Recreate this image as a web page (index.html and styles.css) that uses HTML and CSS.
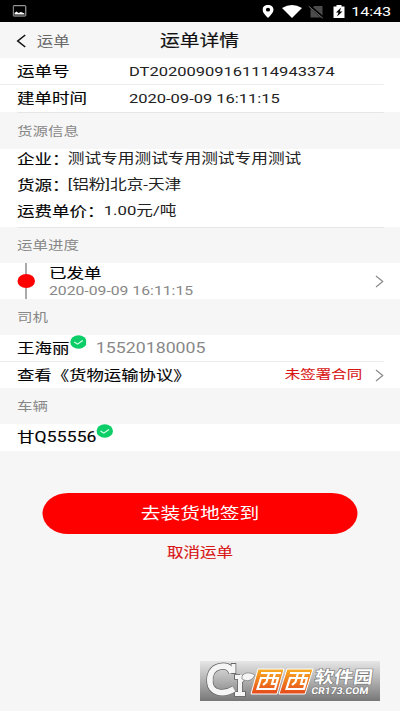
FILE: index.html
```html
<!DOCTYPE html>
<html lang="zh-CN">
<head>
<meta charset="utf-8">
<title>运单详情</title>
<link rel="stylesheet" href="styles.css">
</head>
<body>
<main class="screen">
  <div class="status">
    <svg class="pic" width="11.2" height="12" viewBox="0 0 14 12" preserveAspectRatio="none"><rect x=".7" y=".7" width="12.6" height="10.3" rx=".6" fill="none" stroke="#bbb" stroke-width="1"/><path d="M2 9.500V8L4 6.500L6 8L8.500 7L12 8.500V9.500Z" fill="#fff"/></svg>
    <svg class="tray" width="92" height="16" viewBox="0 0 115 16" preserveAspectRatio="none">
      <path fill="#fff" fill-rule="evenodd" d="M5.500 2C2.300 2 0 4 0 6.800C0 10 5.500 15 5.500 15S11 10 11 6.800C11 4 8.700 2 5.500 2ZM5.500 4.800A2.100 1.900 0 1 1 5.500 8.600A2.100 1.900 0 1 1 5.500 4.800Z"/>
      <path fill="#fff" d="M19.500 5Q29.500-1 39.500 5L29.500 15Z"/>
      <path fill="#4c4c4c" d="M48 5.500L52 3H60V14.500H48Z"/><path d="M46.500 2.500L61 15" stroke="#000" stroke-width="2.600"/><path d="M46.300 3.300L60.300 15.200" stroke="#777" stroke-width="1"/>
      <path fill="#fff" d="M71 3.500H74V2H79V3.500H82V15H71Z"/><path d="M78.500 4.500L73.500 9.500H76L74.500 13.500L80 8.500H77.300Z" fill="#000"/>
    </svg>
    <span class="clock">14:43</span>
  </div>
  <header class="nav">
    <svg width="8" height="14" viewBox="0 0 10 14" preserveAspectRatio="none"><path d="M9 1L1.500 7L9 13" fill="none" stroke="#111" stroke-width="1.600"/></svg>
    <span class="back">运单</span>
    <h1>运单详情</h1>
  </header>

  <div class="row line"><span class="label key">运单号</span><span class="value">DT20200909161114943374</span></div>
  <div class="row second"><span class="label key">建单时间</span><span class="value">2020-09-09 16:11:15</span></div>

  <h2 class="ruled">货源信息</h2>
  <section class="goods">
    <p><span class="label">企业：</span><span class="text">测试专用测试专用测试专用测试</span></p>
    <p><span class="label">货源：</span><span class="text">[铝粉]北京-天津</span></p>
    <p><span class="label">运费单价：</span><span class="text price">1.00元/吨</span></p>
  </section>

  <h2 class="ruled">运单进度</h2>
  <section class="progress">
    <div class="rail"><i></i></div>
    <div class="step"><strong>已发单</strong><time>2020-09-09 16:11:15</time></div>
    <svg class="chevron" width="7" height="13" viewBox="0 0 9 13" preserveAspectRatio="none"><path d="M1 1L8 6.500L1 12" fill="none" stroke="#888" stroke-width="1.200"/></svg>
  </section>

  <h2>司机</h2>
  <div class="row driver line"><span class="label">王海丽</span><svg class="tick" width="13.6" height="14" viewBox="0 0 14 14" preserveAspectRatio="none"><circle cx="7" cy="7" r="6.800" fill="#0bce68"/><path d="M3.500 7L6.200 9.200L10.500 5.500" fill="none" stroke="#d9ffe8" stroke-width="1"/></svg><span class="phone">15520180005</span></div>
  <div class="row contract"><span class="label">查看《货物运输协议》</span><span class="unsigned">未签署合同</span><svg class="chevron" width="7" height="13" viewBox="0 0 9 13" preserveAspectRatio="none"><path d="M1 1L8 6.500L1 12" fill="none" stroke="#888" stroke-width="1.200"/></svg></div>

  <h2>车辆</h2>
  <div class="row vehicle"><span class="label plate">甘Q55556</span><svg class="tick" width="13.6" height="14" viewBox="0 0 14 14" preserveAspectRatio="none"><circle cx="7" cy="7" r="6.800" fill="#0bce68"/><path d="M3.500 7L6.200 9.200L10.500 5.500" fill="none" stroke="#d9ffe8" stroke-width="1"/></svg></div>

  <button class="primary">去装货地签到</button>
  <a class="cancel">取消运单</a>
</main>

<svg class="watermark" width="180" height="40" viewBox="0 0 180 40">
  <defs>
    <linearGradient id="plate" x2="0" y2="1"><stop stop-color="#e6e6e6"/><stop offset=".5" stop-color="#b0b0b0"/><stop offset="1" stop-color="#777"/></linearGradient>
    <linearGradient id="orange" x2="0" y2="1"><stop stop-color="#f9ad21"/><stop offset="1" stop-color="#e5481b"/></linearGradient>
  </defs>
  <rect width="180" height="40" fill="url(#plate)"/>
  <g fill="none">
    <path d="M32 12C30 5 25 4.500 20 5.500C12 7 9 14 10 22C11 31 22 35 34 28" stroke="#666" stroke-width="7"/>
    <path d="M33.500 2V13M40 35V14M34 16H40M34 33H46M41 20C43 16 45 15 49 15" stroke="#666" stroke-width="5.500"/>
    <path d="M32 12C30 5 25 4.500 20 5.500C12 7 9 14 10 22C11 31 22 35 34 28" stroke="#f5f5f5" stroke-width="5.600"/>
    <path d="M33.500 3V12M40 34V14M35 16H40M35 33H45M41 20C43 16 45 15 48 15" stroke="#f5f5f5" stroke-width="4"/>
  </g>
  <path d="M42 15C46 10 51 12 55 14C52 20 47 21 42 18Z" fill="#f5f5f5" stroke="#777" stroke-width=".7"/>
  <path d="M58 8H84L77 33H51ZM87 8H113L105 33H79Z" fill="url(#orange)" stroke="#fff" stroke-width="1"/>
  <g fill="none" stroke="#fff" stroke-width="2.200">
    <path d="M61 12H81M61 17H78L75 28H57.500ZM69 12L66.500 21L63 24M75 12L72 23H76"/>
    <path d="M90 12H110M90 17H107L104 28H86.500ZM98 12L95.500 21L92 24M104 12L101 23H105"/>
  </g>
  <g class="mark">
    <text class="mark-cn" transform="translate(114 22) skewX(-8)" textLength="58" lengthAdjust="spacingAndGlyphs">软件园</text>
    <text class="mark-en" transform="translate(111 33) skewX(-8)" textLength="57" lengthAdjust="spacingAndGlyphs">CR173.COM</text>
  </g>
</svg>
</body>
</html>
```
FILE: styles.css
```css
* { box-sizing: border-box; }

body {
  margin: 0;
  width: 400px;
  height: 711px;
  overflow: hidden;
  background: #f6f6f6;
  font-family: Roboto, "Noto Sans CJK SC", sans-serif;
}

/* 320-unit wide layout stretched to the full display width */
.screen {
  width: 320px;
  height: 711px;
  transform: scaleX(1.25);
  transform-origin: 0 0;
  color: #111;
}

.status {
  display: flex;
  align-items: center;
  height: 22px;
  padding: 0 7.5px 0 10.4px;
  background: #000;
  color: #fff;
}
.tray { margin-left: auto; margin-right: -20.5px; }
.clock { font-size: 13px; line-height: 23px; width: 31.5px; text-align: right; letter-spacing: -.1px; }

.nav {
  display: grid;
  grid-template-columns: 10px 60px 1fr;
  align-items: center;
  height: 36px;
  padding: 0 13px;
}
.nav h1 {
  margin: 0 0 0 45px;
  font-size: 15.800px;
  line-height: 38px;
  font-weight: 400;
  -webkit-text-stroke: .2px #111;
}
.back { padding-left: 6.4px; font-size: 13.2px; line-height: 37px; color: #666; }

.row {
  display: flex;
  align-items: center;
  height: 27px;
  padding: 0 13.6px;
  background: #fff;
  line-height: 27px;
}
.line { background: linear-gradient(#ededed, #ededed) 0 100% / 307px 1px no-repeat #fff; }
.second { height: 27px; }
.label { font-size: 14px; white-space: nowrap; -webkit-text-stroke: .12px #111; color: #000; }
.key { width: 89.600px; }
.value { font-size: 13.200px; color: #222; }

h2 {
  margin: 0;
  padding-left: 13.6px;
  height: 36px;
  font-size: 12.400px;
  line-height: 37px;
  font-weight: 400;
  color: #888;
}
h2.ruled { background: linear-gradient(#e6e6e6, #e6e6e6) 13.600px 0 / 293.400px 1px no-repeat; }
.second + h2.ruled { height: 37px; line-height: 39px; }

.goods {
  height: 78px;
  padding: 0 13.6px;
  background: #fff;
}
.goods p { display: flex; margin: 0; height: 26px; line-height: 20px; }
.text { margin-left: -1.400px; font-size: 13.350px; color: #222; white-space: nowrap; }
.price { margin-left: -.6px; }

.progress {
  display: flex;
  align-items: center;
  height: 36px;
  padding: 0 13.6px;
  background: #fff;
}
.rail {
  display: grid;
  place-items: center;
  width: 14px;
  height: 36px;
  background: linear-gradient(#aaa, #aaa) center / 1.600px 100% no-repeat;
}
.rail i { width: 14px; height: 14px; border-radius: 50%; background: #f00; }
.step { margin-left: 11.600px; }
.step strong { display: block; font-size: 14px; line-height: 20px; font-weight: 400; color: #000; -webkit-text-stroke: .12px #000; }
.step time { display: block; font-size: 12.600px; line-height: 16px; color: #888; }
.chevron { margin-left: auto; margin-right: -.6px; }

.tick { margin-top: -14px; }
.phone { margin-left: 7.500px; font-size: 14.200px; color: #888; }
.contract { height: 26px; line-height: 28px; }
.contract .label { font-size: 13.900px; }
.unsigned { margin-left: auto; font-size: 12.400px; color: #d91414; -webkit-text-stroke: .12px #d91414; }
.contract .chevron { margin-left: 10.300px; }
.plate { letter-spacing: .1px; line-height: 29px; }

.primary {
  display: block;
  width: 252.800px;
  height: 41px;
  margin: 42px 0 0 33.600px;
  padding: 0;
  border: 0;
  border-radius: 20.500px;
  background: #f00;
  color: #fff;
  font: 15.800px/42px Roboto, "Noto Sans CJK SC", sans-serif;
}
.cancel {
  display: block;
  margin-top: 6px;
  font-size: 13.200px;
  line-height: 26px;
  text-align: center;
  color: #d91414;
  -webkit-text-stroke: .12px #d91414;
}

/* Logo stamp lying over the lower corner */
.watermark { position: absolute; left: 200px; top: 661px; }
.mark { fill: #fff; stroke: #777; stroke-width: 1.200px; paint-order: stroke; }
.mark-cn { font: 700 17px "Noto Sans CJK SC", sans-serif; }
.mark-en { font: 700 9.500px Roboto, sans-serif; }
```
